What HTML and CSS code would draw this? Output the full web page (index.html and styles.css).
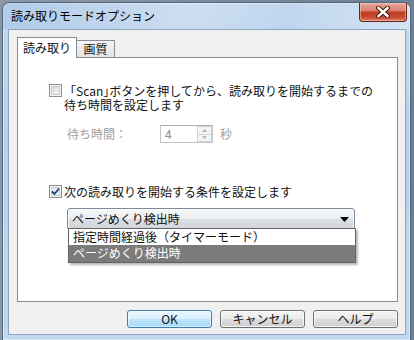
FILE: index.html
```html
<!DOCTYPE html>
<html lang="ja">
<head>
<meta charset="utf-8">
<title>読み取りモードオプション</title>
<link rel="stylesheet" href="styles.css">
</head>
<body>
<div class="window">
  <div class="titlebar">
    <span class="title">読み取りモードオプション</span>
    <div class="close">
      <svg width="14" height="12" viewBox="0 0 14 12">
        <path d="M2.5 2 L11.5 10 M11.5 2 L2.5 10" stroke="#4a1a14" stroke-width="4.6" stroke-linecap="square" fill="none"/>
        <path d="M2.5 2 L11.5 10 M11.5 2 L2.5 10" stroke="#ffffff" stroke-width="2.4" stroke-linecap="square" fill="none"/>
      </svg>
    </div>
  </div>
  <div class="client">
    <div class="tabs">
      <div class="tab active">読み取り</div>
      <div class="tab">画質</div>
    </div>
    <div class="panel">
      <div class="opt opt1">
        <span class="cb"></span>
        <div class="opt-text">「Scan<span class="br">」</span>ボタンを押してから、読み取りを開始するまでの<br>待ち時間を設定します</div>
      </div>
      <div class="wait">
        <span class="wait-label">待ち時間：</span>
        <div class="spin">
          <span class="spin-val">4</span>
          <div class="spin-btns">
            <span class="sb"><svg width="5" height="3" viewBox="0 0 5 3"><path d="M0 3 L2.5 0 L5 3 Z" fill="#b5b5b5"/></svg></span>
            <span class="sb"><svg width="5" height="3" viewBox="0 0 5 3"><path d="M0 0 L5 0 L2.5 3 Z" fill="#b5b5b5"/></svg></span>
          </div>
        </div>
        <span class="unit">秒</span>
      </div>
      <div class="opt opt2">
        <span class="cb checked"><svg width="9" height="9" viewBox="0 0 9 9"><path d="M1 4.5 L3.5 7 L8 1.5" stroke="#1f3f86" stroke-width="1.8" fill="none"/></svg></span>
        <div class="opt-text">次の読み取りを開始する条件を設定します</div>
      </div>
      <div class="combo">
        <span class="combo-text">ページめくり検出時</span>
        <svg class="combo-arrow" width="9" height="5" viewBox="0 0 9 5"><path d="M0 0 L9 0 L4.5 5 Z" fill="#000"/></svg>
        <ul class="dropdown">
          <li>指定時間経過後（タイマーモード）</li>
          <li class="sel">ページめくり検出時</li>
        </ul>
      </div>
    </div>
    <div class="buttons">
      <div class="btn default">OK</div>
      <div class="btn">キャンセル</div>
      <div class="btn">ヘルプ</div>
    </div>
  </div>
</div>
</body>
</html>
```

FILE: styles.css
```css
* { box-sizing: border-box; }
html, body { margin: 0; padding: 0; }
body {
  width: 414px;
  height: 340px;
  overflow: hidden;
  background: linear-gradient(to right, #8a97a6, #6e7f93);
  font-family: "Noto Sans CJK JP", "Liberation Sans", sans-serif;
  font-size: 12px;
  color: #111;
}
.window {
  margin: 2px 0 0 2px;
  width: 409px;
  height: 338px;
  border: 1px solid #52667c;
  border-bottom: none;
  border-radius: 7px 7px 0 0;
  background: linear-gradient(to bottom, #c6daf0 0%, #b7cfea 40%, #c2d8ef 100%);
  box-shadow: inset 0 0 0 1px rgba(255,255,255,0.45);
  display: flex;
  flex-direction: column;
}
.titlebar {
  height: 26px;
  flex: none;
  display: flex;
  align-items: flex-start;
  padding: 0 3px 0 8px;
  background: linear-gradient(100deg, rgba(160,192,226,0.55) 0%, rgba(255,255,255,0.12) 45%, rgba(180,208,236,0.3) 70%, rgba(222,234,247,0.6) 100%);
  border-radius: 6px 6px 0 0;
}
.title {
  line-height: 26px;
  font-size: 12px;
  color: #000;
}
.close {
  margin-left: auto;
  width: 48px;
  height: 19px;
  border: 1px solid #6a2318;
  border-top: none;
  border-radius: 0 0 4px 4px;
  background: linear-gradient(to bottom, #e9a898 0%, #d9836f 42%, #c23a25 52%, #c8482f 78%, #e07f62 100%);
  box-shadow: inset 0 0 0 1px rgba(255,220,210,0.45);
  display: flex;
  align-items: center;
  justify-content: center;
}
.client {
  flex: 1;
  margin: 0 4px 5px 5px;
  border: 1px solid #8ea4bf;
  background: #f0f0f0;
  padding: 7px 7px 0 8px;
  display: flex;
  flex-direction: column;
}
.tabs {
  display: flex;
  align-items: flex-end;
  height: 20px;
  position: relative;
  z-index: 1;
}
.tab {
  height: 17px;
  width: 38px;
  border: 1px solid #898c95;
  border-bottom: none;
  border-left: none;
  background: linear-gradient(to bottom, #f3f3f3, #e3e3e3);
  text-align: center;
  line-height: 16px;
  font-size: 12px;
}
.tab.active {
  width: 60px;
  height: 21px;
  margin-bottom: -1px;
  border-left: 1px solid #898c95;
  background: #fff;
  line-height: 20px;
}
.panel {
  height: 245px;
  flex: none;
  border: 1px solid #898c95;
  background: #fff;
  padding-top: 26px;
}
.opt {
  display: flex;
  align-items: flex-start;
  margin-left: 31px;
}
.opt-text {
  margin-left: 2px;
  line-height: 14px;
}
.br { font-feature-settings: "halt"; }
.cb {
  width: 13px;
  height: 13px;
  flex: none;
  border: 1px solid #8e8f8f;
  background: linear-gradient(135deg, #d2d4d6 0%, #f6f6f6 100%);
  box-shadow: inset 0 0 0 1px #f4f4f4, inset 0 0 0 2px #c8cbce;
}
.cb.checked {
  background: linear-gradient(135deg, #dfe3e8 0%, #f8f8f8 100%);
  display: flex;
  align-items: center;
  justify-content: center;
}
.wait {
  display: flex;
  align-items: center;
  margin: 13px 0 0 49px;
  color: #a0a0a0;
}
.wait-label {
  width: 93px;
  line-height: 18px;
}
.spin {
  width: 53px;
  height: 18px;
  border: 1px solid #c2c4c8;
  border-top-color: #abadb3;
  background: #fff;
  display: flex;
  align-items: center;
}
.spin-val {
  flex: 1;
  padding-left: 4px;
  line-height: 16px;
  color: #8c8c8c;
}
.spin-btns {
  width: 15px;
  height: 16px;
  display: flex;
  flex-direction: column;
}
.sb {
  flex: 1;
  border: 1px solid #d3d3d3;
  background: #f4f4f4;
  display: flex;
  align-items: center;
  justify-content: center;
}
.sb + .sb { border-top: none; }
.unit {
  margin-left: 7px;
  line-height: 18px;
}
.opt2 { margin-top: 42px; }
.combo {
  position: relative;
  margin: 9px 0 0 49px;
  width: 288px;
  height: 22px;
  border: 1px solid #7d8a99;
  border-radius: 3px;
  background: linear-gradient(to bottom, #f6f7f8 0%, #eceef0 48%, #dadde1 52%, #d2d5d9 100%);
  box-shadow: inset 0 0 0 1px rgba(255,255,255,0.7);
  display: flex;
  align-items: center;
  padding: 0 5px 0 4px;
}
.combo-text {
  flex: 1;
  line-height: 20px;
}
.combo-arrow { flex: none; }
.dropdown {
  position: absolute;
  top: calc(100% - 1px);
  left: 0;
  width: 288px;
  margin: 0;
  padding: 0;
  list-style: none;
  border: 1px solid #646464;
  background: #fff;
  box-shadow: 2px 2px 2px rgba(0,0,0,0.28);
  z-index: 2;
}
.dropdown li {
  height: 16px;
  line-height: 16px;
  padding-left: 4px;
}
.dropdown li.sel {
  background: #7b7b7b;
  color: #fff;
  height: 17px;
}
.buttons {
  display: flex;
  justify-content: flex-end;
  gap: 8px;
  margin-top: 8px;
}
.btn {
  width: 85px;
  height: 18px;
  border: 1px solid #707070;
  border-radius: 3px;
  background: linear-gradient(to bottom, #f4f4f4 0%, #ebebeb 49%, #dddddd 51%, #cfcfcf 100%);
  box-shadow: inset 0 0 0 1px rgba(255,255,255,0.75);
  text-align: center;
  line-height: 16px;
  font-size: 12px;
}
.btn.default {
  border-color: #3c7fb1;
  background: linear-gradient(to bottom, #eaf6fd 0%, #d9f0fc 49%, #bee6fd 51%, #a7d9f5 100%);
  box-shadow: inset 0 0 0 1px rgba(255,255,255,0.6);
}
```
